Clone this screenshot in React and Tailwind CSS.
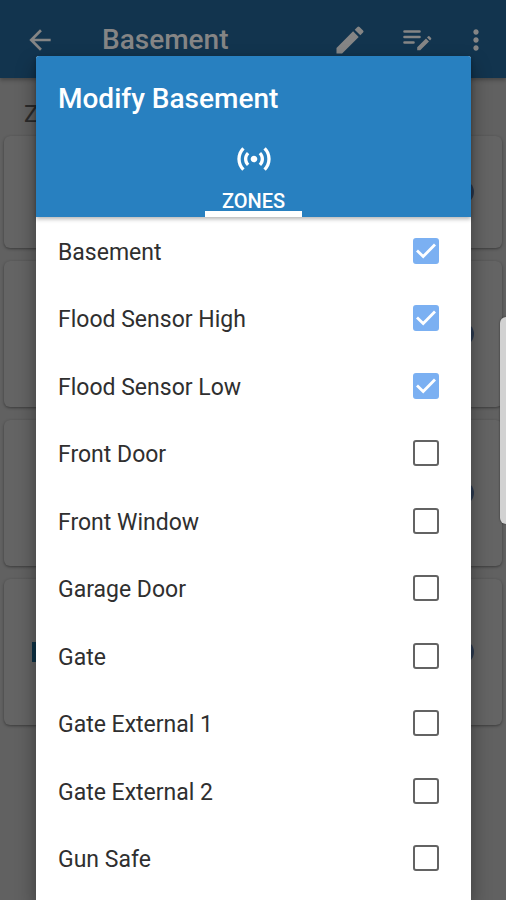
import React, { useState } from 'react';
import { MdArrowBack, MdEdit, MdMoreVert, MdSensors } from 'react-icons/md';

const ZONES = [
  { id: 'basement', name: 'Basement', checked: true },
  { id: 'flood-high', name: 'Flood Sensor High', checked: true },
  { id: 'flood-low', name: 'Flood Sensor Low', checked: true },
  { id: 'front-door', name: 'Front Door', checked: false },
  { id: 'front-window', name: 'Front Window', checked: false },
  { id: 'garage-door', name: 'Garage Door', checked: false },
  { id: 'gate', name: 'Gate', checked: false },
  { id: 'gate-ext-1', name: 'Gate External 1', checked: false },
  { id: 'gate-ext-2', name: 'Gate External 2', checked: false },
  { id: 'gun-safe', name: 'Gun Safe', checked: false },
];

const CARDS = [
  { id: 1, height: 'h-28', hasIcon: false },
  { id: 2, height: 'h-[146px]', hasIcon: false },
  { id: 3, height: 'h-[146px]', hasIcon: false },
  { id: 4, height: 'h-[146px]', hasIcon: true },
];

function ListEditIcon() {
  return (
    <svg viewBox="0 0 30 24" className="h-6 w-[30px]" fill="none" stroke="currentColor">
      <path d="M2.5 3.5H17.5M2.5 9H17.5M2.5 14.5H11.5" strokeWidth="2.6" strokeLinecap="round" />
      <path d="M15.2 22.2V19.2L24 10.4L27 13.4L18.2 22.2ZM25 9.4L26.2 8.2Q26.8 7.8 27.4 8.2L29.1 9.9Q29.6 10.6 29.1 11.2L28 12.4Z" fill="currentColor" stroke="none" />
    </svg>
  );
}

function ZoneRow({ zone, onToggle }) {
  return (
    <li className="flex-1 min-h-14">
      <label htmlFor={zone.id} className="flex h-full items-center justify-between pl-[22px] pr-8 cursor-pointer">
        <span className="pt-1 text-[23px] leading-7 text-[#2f2f2f]">{zone.name}</span>
        <span className="relative flex">
          <input
            id={zone.id}
            type="checkbox"
            checked={zone.checked}
            onChange={() => onToggle(zone.id)}
            className="peer size-[26px] appearance-none rounded-[3px] border-2 border-[#636363] bg-white checked:border-[#7bb0f2] checked:bg-[#7bb0f2]"
          />
          <svg viewBox="0 0 26 26" className="pointer-events-none absolute inset-0 hidden size-[26px] peer-checked:block" fill="none" stroke="white" strokeWidth="2.8">
            <path d="M4 12.5 10.2 18.5 22 6.5" />
          </svg>
        </span>
      </label>
    </li>
  );
}

export default function App() {
  const [zones, setZones] = useState(ZONES);

  const toggleZone = (id) => {
    setZones(prev => prev.map(z => (z.id === id ? { ...z, checked: !z.checked } : z)));
  };

  return (
    <div className="relative h-screen overflow-hidden bg-[#616161] font-['Roboto',sans-serif]">
      {/* Dimmed page behind the dialog */}
      <header className="flex h-[78px] items-center bg-[#12344e] pt-0.5 pl-6 pr-3.5 text-[#858585] shadow-[0_2px_4px_rgba(0,0,0,0.3)]">
        <button aria-label="Back"><MdArrowBack className="size-8" /></button>
        <h1 className="ml-[46px] flex-1 text-[28px] leading-8 font-medium">Basement</h1>
        <div className="flex items-center gap-7">
          <button aria-label="Edit" className="mr-1.5"><MdEdit className="size-9" /></button>
          <button aria-label="Edit list"><ListEditIcon /></button>
          <button aria-label="More"><MdMoreVert className="size-8" /></button>
        </div>
      </header>
      <main className="px-1">
        <h2 className="px-5 pt-[22px] pb-2 text-2xl leading-7 text-[#2b2b2b]">Z</h2>
        <div className="flex flex-col gap-[13px]">
          {CARDS.map(card => (
            <div key={card.id} className={`flex items-center justify-between rounded-md bg-[#646464] px-7 shadow-[0_1px_3px_rgba(0,0,0,0.4)] ${card.height}`}>
              <span className={card.hasIcon ? 'h-5 w-6 bg-[#0e3347]' : 'h-5 w-6'} />
              <span className="size-6 rounded-full bg-[#2b3a50]" />
            </div>
          ))}
        </div>
      </main>
      <div className="absolute right-0 top-[317px] h-[207px] w-[6px] rounded-l-md bg-[#d2d2d2] shadow-[0_0_2px_rgba(0,0,0,0.6)]" />

      {/* Dialog */}
      <div className="absolute inset-0 pl-9 pr-[35px] pt-14">
        <div role="dialog" aria-labelledby="dialog-title" className="flex h-full flex-col rounded-t-[3px] bg-white shadow-[0_10px_20px_rgba(0,0,0,0.4)]">
          <div className="z-10 rounded-t-[3px] bg-[#2880c0] text-white shadow-[0_2px_4px_rgba(0,0,0,0.3)]">
            <h2 id="dialog-title" className="px-[22px] pt-[27px] text-[28px] leading-8 font-medium">Modify Basement</h2>
            <div role="tablist" className="flex justify-center pt-6">
              <button role="tab" aria-selected="true" className="flex w-[97px] flex-col items-center border-b-[6px] border-white">
                <MdSensors className="size-10" />
                <span className="mt-3 text-xl leading-5 font-medium">ZONES</span>
              </button>
            </div>
          </div>
          <ul className="flex min-h-0 flex-1 flex-col overflow-y-auto pb-2">
            {zones.map(zone => (
              <ZoneRow key={zone.id} zone={zone} onToggle={toggleZone} />
            ))}
          </ul>
        </div>
      </div>
    </div>
  );
}
